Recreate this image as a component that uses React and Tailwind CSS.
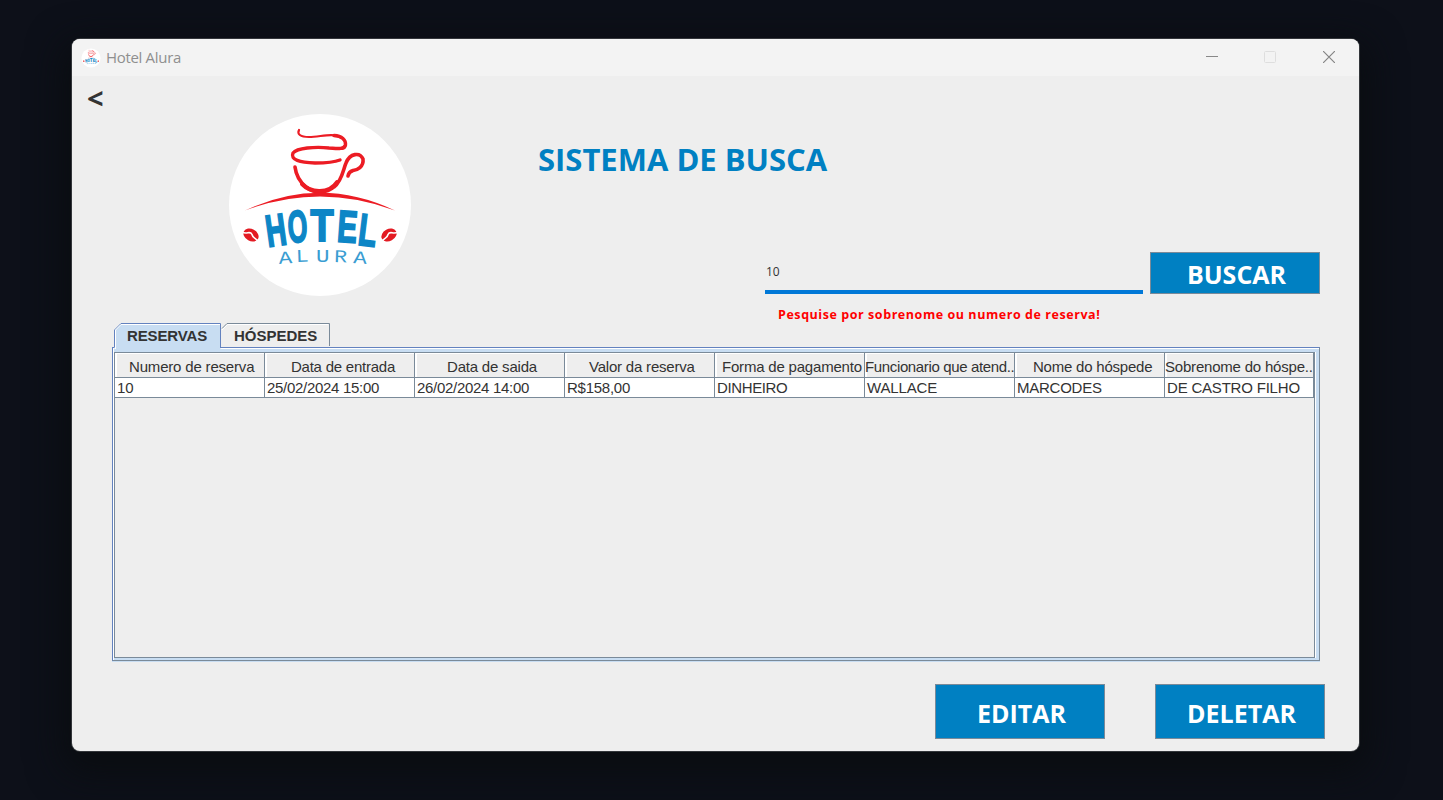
const UI = "font-['Open_Sans',sans-serif]";

function Logo({ className }) {
  return (
    <svg viewBox="0 0 190 190" className={className}>
      <circle cx="95" cy="95" r="91" fill="#fff" />
      <g fill="none" stroke="#ec1c24" strokeLinecap="round" strokeLinejoin="round">
        <path d="M74 20C72 24 75 27 84 27C96 27 108 22 117 28C122 32 122 38 117 39" strokeWidth="2.2" />
        <path d="M109 25.500C117 26 121 30 120.500 35C118 40 112 38.500 104 38C90 36.500 72 38 68 43C65 50 75 52.500 90 53C102 53 110 52 115 50" strokeWidth="3.400" />
        <path d="M70 57C71 65 75 72 81 77C90 84 102 83 109 77C117 71 118 60 121 53C125 43 135 42 138 49C139 57 132 60 128 60.500C125 61.500 123.500 63 123 66" strokeWidth="3.600" />
        <path d="M77 74C86 83.500 104 84 112 72" strokeWidth="4" />
      </g>
      <path d="M20 100.500Q95 65 170 100.500Q95 72.500 20 100.500Z" fill="#ec1c24" />
      <g fill="#0d86c6" stroke="#0d86c6" strokeWidth="2" fontFamily="Liberation Sans" fontWeight="700" fontSize="45">
        <text transform="translate(43 137) rotate(-8) scale(.62 1)">H</text>
        <text transform="translate(63.500 132.500) rotate(-3) scale(.56 1)">O</text>
        <text transform="translate(85.500 130.500) scale(.84 1)">T</text>
        <text transform="translate(111.500 131.500) rotate(4) scale(.66 1)">E</text>
        <text transform="translate(132 134.500) rotate(7) scale(.66 1)">L</text>
      </g>
      <g fill="#3a9dd2" fontFamily="Liberation Mono" fontSize="18">
        <text transform="translate(54 154) rotate(-4) scale(1.250 1)">A</text>
        <text transform="translate(71 152) rotate(-2) scale(1.200 1)">L</text>
        <text transform="translate(91 151.500) scale(1.250 1)">U</text>
        <text transform="translate(109 152) rotate(2) scale(1.200 1)">R</text>
        <text transform="translate(128 153) rotate(4) scale(1.250 1)">A</text>
      </g>
      <g fill="#e31b23">
        <ellipse cx="26" cy="125" rx="8" ry="6" transform="rotate(28 26 125)" />
        <ellipse cx="164" cy="125" rx="8" ry="6" transform="rotate(-28 164 125)" />
      </g>
      <g fill="none" stroke="#fff" strokeWidth="1.600">
        <path d="M17 122C22 125 25 120 27 124.500C28 129 31 127 33 132" />
        <path d="M173 122C168 125 165 120 163 124.500C162 129 159 127 157 132" />
      </g>
    </svg>
  );
}

function Button({ className, children }) {
  return (
    <button className={`w-[170px] border border-[#7a8a99] bg-[#0080c2] text-center font-bold text-white ${UI} text-[25px] leading-[30px] ${className}`}>
      {children}
    </button>
  );
}

const columns = [
  ["Numero de reserva", "10", "pl-[14px] tracking-[-0.18px]", "tracking-normal"],
  ["Data de entrada", "25/02/2024 15:00", "pl-[26px] tracking-[-0.24px]", "tracking-[-0.3px]"],
  ["Data de saida", "26/02/2024 14:00", "pl-[32px] tracking-[-0.2px]", "tracking-[-0.3px]"],
  ["Valor da reserva", "R$158,00", "pl-[24px] tracking-[-0.2px]", "tracking-[-0.25px]"],
  ["Forma de pagamento", "DINHEIRO", "pl-[7px] tracking-[-0.2px]", "tracking-[-0.38px]"],
  ["Funcionario que atend..", "WALLACE", "pl-0 tracking-[-0.36px]", "tracking-[-0.14px]"],
  ["Nome do hóspede", "MARCODES", "pl-[18px] tracking-[-0.22px]", "tracking-[-0.25px]"],
  ["Sobrenome do hóspe..", "DE CASTRO FILHO", "pl-0 tracking-[-0.2px]", "tracking-[-0.2px]"],
];

function Table() {
  return (
    <div className="grid h-[45px] grid-cols-[repeat(7,150px)_149px] text-[15px] text-[#333]">
      {columns.map(([title, value, head, cell]) => (
        <div key={title} className="flex flex-col overflow-hidden whitespace-nowrap border-r border-[#7a8a99]">
          <div className={`h-[25px] border-b border-[#7a8a99] bg-[#eee] pt-[4px] leading-[20px] shadow-[inset_2px_1px_0_#fff] ${head}`}>{title}</div>
          <div className={`h-[20px] border-b border-[#7a8a99] bg-white pl-[2px] leading-[19px] ${cell}`}>{value}</div>
        </div>
      ))}
    </div>
  );
}

function TitleBar() {
  return (
    <header className="flex h-[37px] items-center bg-[#f3f3f3] pl-[9px]">
      <Logo className="size-[20px]" />
      <span className={`ml-[5px] text-[15px] tracking-[-0.32px] text-[#8f8f8f] ${UI}`}>Hotel Alura</span>
      <div className="ml-auto flex items-center pb-[2px] pr-[24px]">
        <svg className="h-3 w-3" viewBox="0 0 12 12"><path d="M0 5.500H12" stroke="#888" /></svg>
        <svg className="ml-[46px] h-3 w-3" viewBox="0 0 12 12"><rect x=".5" y=".5" width="11" height="11" rx="1" fill="none" stroke="#dedede" /></svg>
        <svg className="ml-[47px] h-3 w-3" viewBox="0 0 12 12"><path d="M0 0L12 12M12 0L0 12" stroke="#858585" strokeWidth="1.200" /></svg>
      </div>
    </header>
  );
}

export default function App() {
  return (
    <div className="flex h-[800px] w-[1443px] overflow-hidden bg-[#0d1019] pl-[72px] pt-[39px] font-['Liberation_Sans',Arial,sans-serif]">
      <main className="flex h-[712px] w-[1287px] flex-col overflow-hidden rounded-[8px] bg-[#eee] shadow-[0_0_0_1px_#33363a,0_12px_36px_8px_#0a0d10]">
        <TitleBar />
        <div className="flex h-[247px]">
          <div className={`w-[153px] pl-[15px] pt-[7px] text-[29px] font-bold leading-[30px] text-[#333] ${UI}`}>&lt;</div>
          <Logo className="mt-[34px] size-[190px]" />
          <h1 className={`ml-[123px] mt-[63px] w-[227px] whitespace-nowrap text-[31px] font-bold leading-[40px] text-[#0080c2] ${UI}`}>SISTEMA DE BUSCA</h1>
          <div className="mt-[176px] w-[378px]">
            <div className={`h-[42px] border-b-4 border-[#0078d7] pl-[1px] text-[12px] leading-[40px] text-[#333] ${UI}`}>10</div>
            <p className={`ml-[13px] mt-[11px] whitespace-nowrap text-[12.500px] font-bold leading-[20px] tracking-[0.56px] text-[#f00] ${UI}`}>Pesquise por sobrenome ou numero de reserva!</p>
          </div>
          <Button className="ml-[7px] mt-[176px] h-[42px] pl-[3px] pt-[1px]">BUSCAR</Button>
        </div>
        <div className="ml-[40px] flex h-[338px] w-[1208px] flex-col">
          <div className="z-10 flex h-[24px] pl-[2px] text-[15px] font-bold leading-[26px] text-[#333]">
            <div className="relative flex h-[25px] w-[107px] pl-[13px]">
              <svg className="absolute left-0 top-0 h-[26px] w-[107px]" viewBox="0 0 107 26">
                <path d="M.5 26V7L7 .5H106.500V26Z" fill="#c8ddf2" />
                <path d="M.5 24V7L7 .5H106.500V25" fill="none" stroke="#6382bf" />
                <path d="M1.500 26V7L7 1.500H106" fill="none" stroke="#fff" />
              </svg>
              <span className="relative tracking-[-0.12px]">RESERVAS</span>
            </div>
            <div className="relative flex h-[24px] w-[109px] pl-[13px]">
              <svg className="absolute left-0 top-0 h-[24px] w-[109px]" viewBox="0 0 109 24">
                <path d="M1 5.500L6 .5H108.500V23" fill="none" stroke="#7a8a99" />
                <path d="M1 7L6.500 1.500H107" fill="none" stroke="#fff" />
              </svg>
              <span className="relative">HÓSPEDES</span>
            </div>
          </div>
          <div className="flex h-[314px] border border-b-[#7a8a99] border-l-[#6382bf] border-r-[#7a8a99] border-t-[#6382bf] bg-[#c8ddf2] pb-[2px] pl-[1px] pr-[4px] pt-[4px] shadow-[inset_1px_1px_0_#fff,0_1px_0_#c8ddf2]">
            <div className="h-full w-[1201px] overflow-hidden border border-[#7a8a99] bg-[#eee] shadow-[1px_0_0_#fff]">
              <Table />
            </div>
          </div>
        </div>
        <div className="flex justify-end gap-[50px] pr-[34px] pt-[23px]">
          <Button className="h-[55px] pl-[3px] pt-[3px]">EDITAR</Button>
          <Button className="h-[55px] pl-[3px] pt-[3px]">DELETAR</Button>
        </div>
      </main>
    </div>
  );
}
